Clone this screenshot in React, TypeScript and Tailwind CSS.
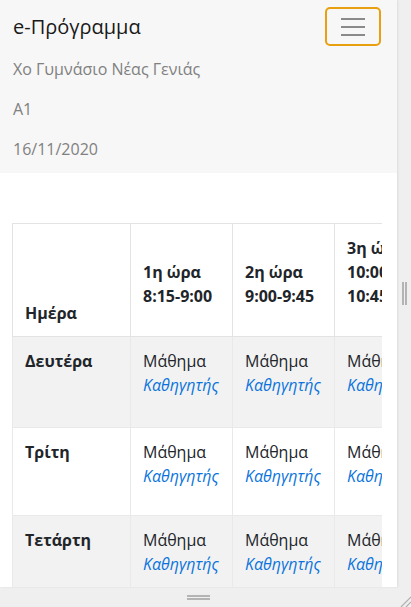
import React from "react";

const hours = [
  { label: "1η ώρα", time: "8:15-9:00" },
  { label: "2η ώρα", time: "9:00-9:45" },
  { label: "3η ώρα", time: "10:00-10:45" },
  { label: "4η ώρα", time: "11:00-11:45" },
  { label: "5η ώρα", time: "11:50-12:35" },
  { label: "6η ώρα", time: "12:40-13:25" },
  { label: "7η ώρα", time: "13:30-14:10" },
];

const days = [
  { name: "Δευτέρα", h: "h-[91px]", striped: true },
  { name: "Τρίτη", h: "h-[88px]", striped: false },
  { name: "Τετάρτη", h: "h-[88px]", striped: true },
  { name: "Πέμπτη", h: "h-[88px]", striped: false },
  { name: "Παρασκευή", h: "h-[88px]", striped: true },
];

function Navbar() {
  return (
    <nav className="bg-[#f7f7f7] h-[173px] px-[13px] pt-[12px]">
      <div className="flex items-start justify-between">
        <a className="text-[20px] leading-[30px] text-[#1a1a1a]">e-Πρόγραμμα</a>
        {/* toggler, shown focused */}
        <button className="-mt-[5px] mr-[3px] w-[56px] h-[39px] rounded-[5px] border-2 border-[#e89f10] flex flex-col items-center justify-center gap-[6px]">
          <span className="block w-[24px] h-[2px] bg-[#8a8a8a]" />
          <span className="block w-[24px] h-[2px] bg-[#8a8a8a]" />
          <span className="block w-[24px] h-[2px] bg-[#8a8a8a]" />
        </button>
      </div>
      <div className="mt-[11px] text-[#808080] text-[16px] leading-[24px]">
        <p className="mb-4">Χο Γυμνάσιο Νέας Γενιάς</p>
        <p className="mb-4">A1</p>
        <p>16/11/2020</p>
      </div>
    </nav>
  );
}

function Timetable() {
  return (
    <div className="ml-[12px] w-[370px] overflow-hidden">
      <table className="table-fixed border-collapse w-[832px] text-[16px] leading-[24px] text-[#212529]">
        <colgroup>
          <col className="w-[118px]" />
          {hours.map((h) => (
            <col key={h.label} className="w-[102px]" />
          ))}
        </colgroup>
        <thead>
          <tr className="h-[113px]">
            <th className="border border-[#e3e3e3] align-bottom text-left font-bold px-3 pb-[11px]">Ημέρα</th>
            {hours.map((h) => (
              <th key={h.label} className="border border-[#e3e3e3] align-bottom text-left font-bold px-3 pb-[28px]">
                {h.label}
                <br />
                {h.time}
              </th>
            ))}
          </tr>
        </thead>
        <tbody>
          {days.map((d) => (
            <tr key={d.name} className={`${d.h} ${d.striped ? "bg-[#f2f2f2]" : "bg-white"}`}>
              <td className="border border-[#e9e9e9] align-top font-bold px-3 pt-[12px]">{d.name}</td>
              {hours.map((h) => (
                <td key={h.label} className="border border-[#e9e9e9] align-top px-3 pt-[12px]">
                  Μάθημα
                  <br />
                  <a className="italic text-[#0a74dc]">Καθηγητής</a>
                </td>
              ))}
            </tr>
          ))}
        </tbody>
      </table>
    </div>
  );
}

export default function App() {
  return (
    <div className="w-[411px] h-[607px] bg-[#efefef] flex flex-col font-['Open_Sans',sans-serif] overflow-hidden">
      <div className="flex h-[587px]">
        <main className="w-[397px] h-[587px] bg-white overflow-hidden shadow-[1px_0_2px_rgba(0,0,0,0.08)]">
          <Navbar />
          <div className="h-[50px]" />
          <Timetable />
        </main>
        {/* right resize strip */}
        <div className="flex-1 flex items-center justify-center">
          <div className="flex gap-[1px]">
            <span className="block w-[2px] h-[23px] bg-[#b4b4b4]" />
            <span className="block w-[2px] h-[23px] bg-[#b4b4b4]" />
          </div>
        </div>
      </div>
      {/* bottom resize strip */}
      <div className="relative flex-1 flex items-center justify-center pr-[14px]">
        <div className="flex flex-col gap-[1px]">
          <span className="block w-[23px] h-[2px] bg-[#b4b4b4]" />
          <span className="block w-[23px] h-[2px] bg-[#b4b4b4]" />
        </div>
        <svg className="absolute right-0 bottom-0" width="12" height="12" viewBox="0 0 12 12">
          <line x1="12" y1="2" x2="2" y2="12" stroke="#b0b0b0" strokeWidth="1.2" />
          <line x1="12" y1="7" x2="7" y2="12" stroke="#b0b0b0" strokeWidth="1.2" />
        </svg>
      </div>
    </div>
  );
}
